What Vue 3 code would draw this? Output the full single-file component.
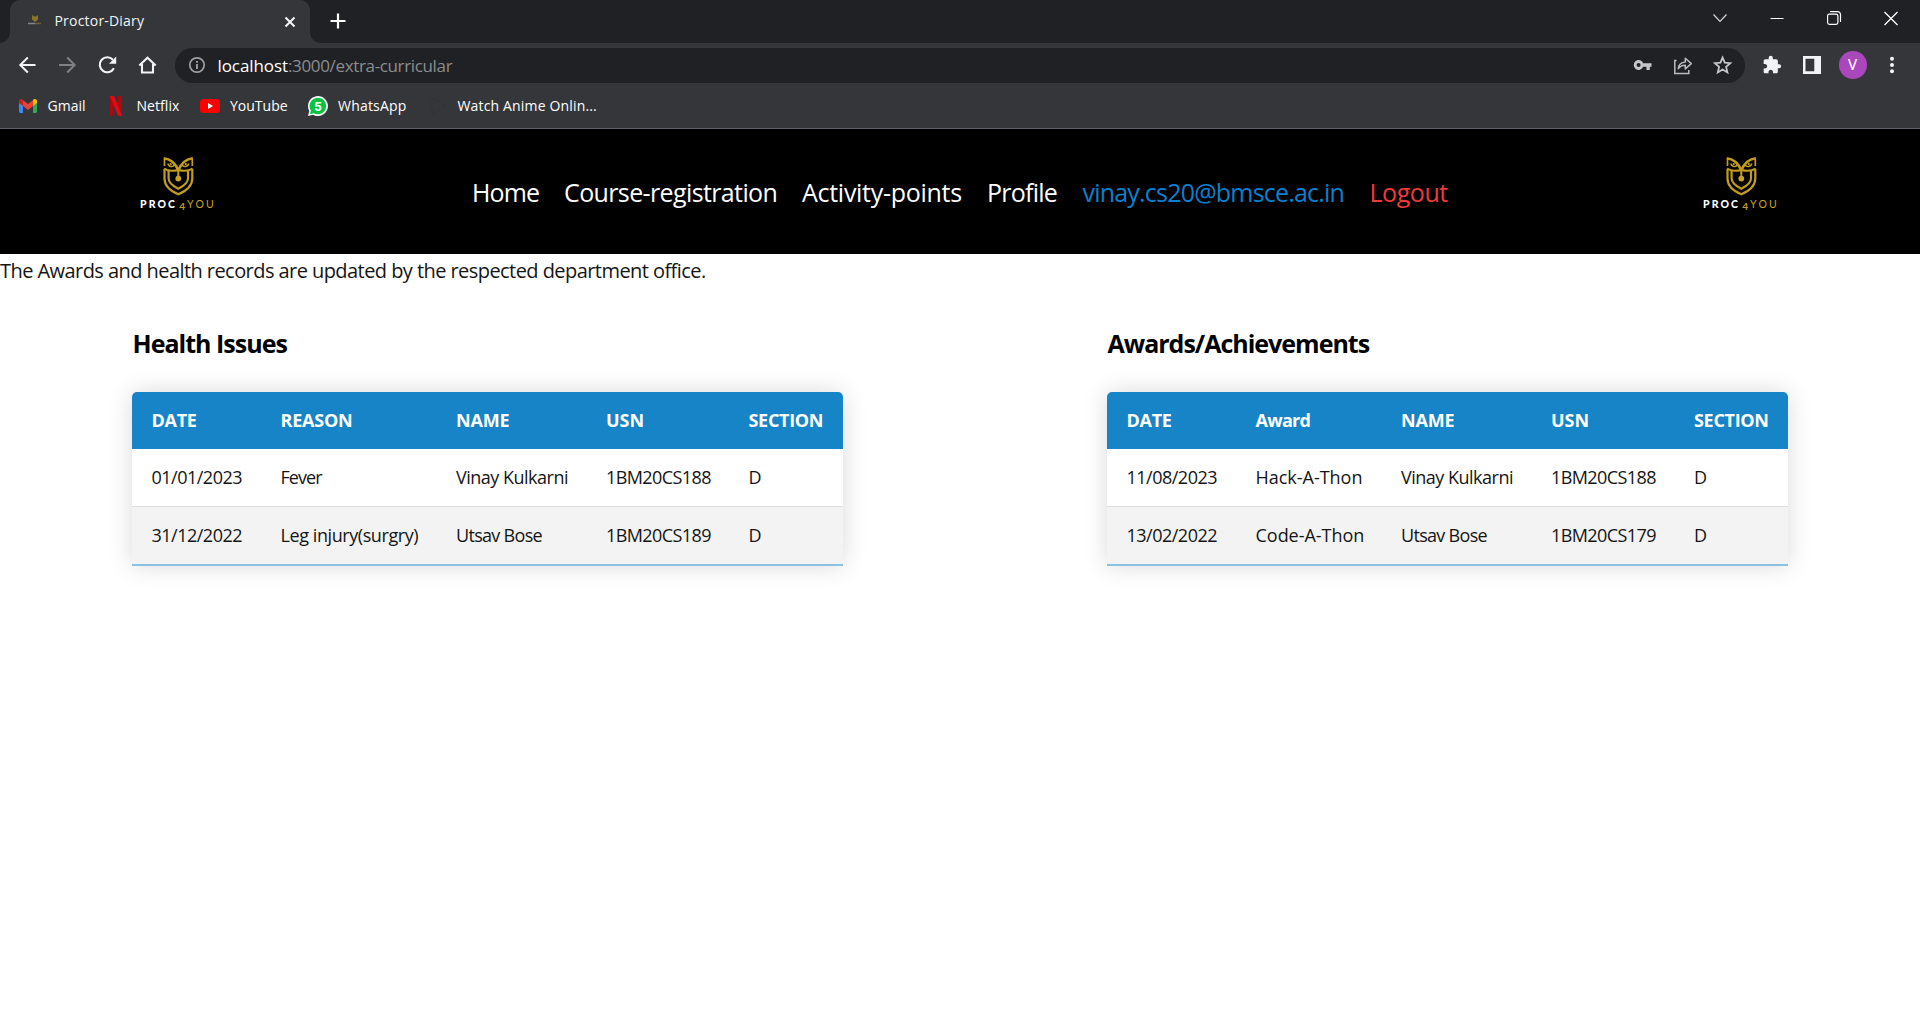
<script setup>
const bookmarks = [
  { id: 'gmail', label: 'Gmail', spacing: 0 },
  { id: 'netflix', label: 'Netflix', spacing: 0.05 },
  { id: 'youtube', label: 'YouTube', spacing: 0 },
  { id: 'whatsapp', label: 'WhatsApp', spacing: 0.2 },
  { id: 'anime', label: 'Watch Anime Onlin...', spacing: 0.16 }
]

const links = [
  { label: 'Home', spacing: -0.85 },
  { label: 'Course-registration', spacing: -0.62 },
  { label: 'Activity-points', spacing: -0.28 },
  { label: 'Profile', spacing: -0.75 },
  { label: 'vinay.cs20@bmsce.ac.in', spacing: -0.79, kind: 'email' },
  { label: 'Logout', spacing: -0.45, kind: 'logout' }
]

const tables = [
  {
    id: 'health',
    title: 'Health Issues',
    spacing: -0.98,
    widths: [129, 175.5, 150, 142.5, 114],
    head: [['DATE', -0.3], ['REASON', -0.22], ['NAME', -0.17], ['USN', 0], ['SECTION', -0.3]],
    rows: [
      [['01/01/2023', -0.5], ['Fever', -0.95], ['Vinay Kulkarni', -0.5], ['1BM20CS188', -0.58], ['D', 0]],
      [['31/12/2022', -0.5], ['Leg injury(surgry)', -0.42], ['Utsav Bose', -0.7], ['1BM20CS189', -0.58], ['D', 0]]
    ]
  },
  {
    id: 'awards',
    title: 'Awards/Achievements',
    spacing: -1,
    widths: [129, 145.5, 150, 143, 113.5],
    head: [['DATE', -0.3], ['Award', -0.7], ['NAME', -0.17], ['USN', 0], ['SECTION', -0.3]],
    rows: [
      [['11/08/2023', -0.5], ['Hack-A-Thon', -0.02], ['Vinay Kulkarni', -0.5], ['1BM20CS188', -0.58], ['D', 0]],
      [['13/02/2022', -0.5], ['Code-A-Thon', -0.02], ['Utsav Bose', -0.7], ['1BM20CS179', -0.58], ['D', 0]]
    ]
  }
]

const ls = (v) => ({ letterSpacing: v + 'px' })
</script>

<template>
  <div class="window">
    <div class="tabstrip">
      <div class="tab">
        <svg class="favicon" width="14" height="12" viewBox="0 0 14 12">
          <path d="M4 1l2 1.500h2L10 1v4.500L7 8 4 5.500z" fill="#8a7426" />
          <path d="M0 9.500h7" stroke="#85868a" stroke-width="1.500" />
          <path d="M7 9.500h6" stroke="#6f6032" stroke-width="1.500" />
        </svg>
        <span class="tab-title">Proctor-Diary</span>
        <svg class="tab-close" width="12" height="12" viewBox="0 0 12 12"><path d="M1.500 1.500l9 9M10.500 1.500l-9 9" stroke="#f4f5f6" stroke-width="2" /></svg>
      </div>
      <svg class="plus" width="16" height="16" viewBox="0 0 16 16"><path d="M8 .5v15M.5 8h15" stroke="#fff" stroke-width="2.200" /></svg>
      <div class="controls">
        <svg width="16" height="16" viewBox="0 0 16 16"><path d="M1.500 4.500L8 11.300l6.500-6.800" fill="none" stroke="#d8d9da" stroke-width="1.200" /></svg>
        <svg width="16" height="16" viewBox="0 0 16 16"><path d="M1.500 8.500h13" stroke="#fff" stroke-width="1" /></svg>
        <svg width="16" height="16" viewBox="0 0 16 16" fill="none" stroke="#fff" stroke-width="1.200"><rect x="1.600" y="4.100" width="10.300" height="10.300" rx="1.800" /><path d="M4 1.600h7.500a3 3 0 0 1 3 3V12" /></svg>
        <svg width="16" height="16" viewBox="0 0 16 16"><path d="M1.500 2l13 13M14.500 2l-13 13" stroke="#fff" stroke-width="1.300" /></svg>
      </div>
    </div>

    <div class="toolbar">
      <svg class="tool" width="20" height="20" viewBox="0 0 20 20" fill="none" stroke="#f1f3f4" stroke-width="2"><path d="M18.500 10H4M10.800 2.500L3.300 10l7.500 7.500" /></svg>
      <svg class="tool" width="20" height="20" viewBox="0 0 20 20" fill="none" stroke="#808184" stroke-width="2"><path d="M2 10H17M10.200 2.500l7.500 7.500-7.500 7.500" /></svg>
      <svg class="tool" width="20" height="20" viewBox="0 0 20 20"><path d="M16.900 13.300A7.500 7.500 0 1 1 15.900 4.800" fill="none" stroke="#f1f3f4" stroke-width="2.100" /><path d="M19.200 1.500v7.200H12z" fill="#f1f3f4" /></svg>
      <svg class="tool" width="20" height="20" viewBox="0 0 20 20" fill="none" stroke="#f1f3f4" stroke-width="2.100"><path d="M2.300 10.600l8.200-7.900 8.200 7.900M5 9v8.500h11V9" /></svg>
      <div class="omnibox">
        <svg class="info" width="18" height="18" viewBox="0 0 18 18"><circle cx="9" cy="9" r="7.200" fill="none" stroke="#9aa0a6" stroke-width="1.700" /><path d="M9 8v5M9 5v1.800" stroke="#9aa0a6" stroke-width="1.900" /></svg>
        <span class="host">localhost</span><span class="path">:3000/extra-curricular</span>
        <div class="box-icons">
          <svg width="20" height="20" viewBox="0 0 20 20"><path fill-rule="evenodd" fill="#c4c7c9" d="M10.200 8.200a4.900 4.900 0 1 0 0 3.600h3.300v3.200h3.300v-3.200h1.700V8.200zM5.600 12a2 2 0 1 1 0-4 2 2 0 0 1 0 4z" /></svg>
          <svg width="20" height="20" viewBox="0 0 20 20" fill="none" stroke="#b9bcbe" stroke-width="1.500"><path d="M3.500 5.500H1.800v13h14v-3.500" /><path d="M5.300 13.700c.3-4.200 2.900-6.500 7-6.800V3.300l6 5.300-6 5.300v-3.700c-3.200 0-5.300 1-7 3.500z" stroke-linejoin="round" /></svg>
          <svg width="20" height="20" viewBox="0 0 20 20"><path d="M9.600 2.600l2.200 5.100 5.500.5-4.200 3.700 1.300 5.500-4.800-2.900-4.800 2.900 1.300-5.500-4.200-3.700 5.500-.5z" fill="none" stroke="#c4c7c9" stroke-width="1.800" /></svg>
        </div>
      </div>
      <svg class="puzzle" width="20" height="20" viewBox="0 0 24 24"><path fill="#f1f3f4" d="M20.500 11H19V7c0-1.100-.9-2-2-2h-4V3.500a2.500 2.500 0 0 0-5 0V5H4c-1.100 0-2 .9-2 2v3.800h1.500c1.500 0 2.700 1.200 2.700 2.700S5 16.200 3.500 16.200H2V20c0 1.100.9 2 2 2h3.800v-1.500c0-1.500 1.200-2.700 2.700-2.700s2.700 1.200 2.700 2.700V22H17c1.100 0 2-.9 2-2v-4h1.500a2.500 2.500 0 0 0 0-5z" /></svg>
      <svg class="panel" width="18" height="18" viewBox="0 0 18 18"><path fill="#f1f3f4" fill-rule="evenodd" d="M0 0h18v18H0zM2.500 2.800v12.400h8.800V2.800z" /></svg>
      <div class="avatar">V</div>
      <svg class="dots" width="6" height="18" viewBox="0 0 6 18" fill="#f1f3f4"><circle cx="3" cy="2.700" r="2" /><circle cx="3" cy="9" r="2" /><circle cx="3" cy="15.300" r="2" /></svg>
    </div>

    <div class="bookmarks">
      <div v-for="b in bookmarks" :key="b.id" class="bookmark" :class="b.id">
        <svg v-if="b.id === 'gmail'" width="18" height="14" viewBox="0 0 18 14">
          <path d="M0 2.500v10C0 13.300.6 14 1.400 14H4V5.500z" fill="#4285f4" /><path d="M18 2.500v10c0 .8-.6 1.500-1.400 1.500H14V5.500z" fill="#34a853" />
          <path d="M4 1.200v5.900l5 3.800 5-3.800V1.200L9 5z" fill="#ea4335" /><path d="M0 2.200C0 .3 2 -.5 3.500.6L4 1v6.100L0 4.100z" fill="#c5221f" /><path d="M18 2.200C18 .3 16 -.5 14.500.6L14 1v6.100l4-3z" fill="#fbbc04" />
        </svg>
        <svg v-else-if="b.id === 'netflix'" width="12" height="20" viewBox="0 0 12 20">
          <path d="M0 0h4v19.500L0 20zM8 0h4v20l-4-.5z" fill="#a90a12" /><path d="M0 0h4l8 20-4-.5z" fill="#e50914" />
        </svg>
        <svg v-else-if="b.id === 'youtube'" width="20" height="14" viewBox="0 0 20 14"><rect width="20" height="14" rx="3.500" fill="#f00" /><path d="M8 4l5 3-5 3z" fill="#fff" /></svg>
        <svg v-else-if="b.id === 'whatsapp'" width="20" height="20" viewBox="0 0 20 20">
          <path d="M0 20l1.300-5A10 10 0 1 1 5 18.700z" fill="#fff" /><path d="M1.900 18.200l1-3.600A8.300 8.300 0 1 1 5.700 17.200z" fill="#06c43f" />
          <text x="10.100" y="14.800" text-anchor="middle" class="badge">5</text>
        </svg>
        <svg v-else width="16" height="18" viewBox="0 0 16 18"><path d="M1 1l14 8-14 8z" fill="none" stroke="#323336" stroke-width="1" /></svg>
        <span class="mark-label" :style="ls(b.spacing)">{{ b.label }}</span>
      </div>
    </div>

    <header class="site-header">
      <div v-for="side in ['left', 'right']" :key="side" class="logo" :class="side">
        <svg width="80" height="58" viewBox="0 0 80 58">
          <g fill="none" stroke="#c09c1f" stroke-width="2.200">
            <path d="M25.500 22v9.500C25.500 39 31.500 44 39.300 47.300 47 44 53.300 39 53.300 31.500V22" />
            <path d="M29.600 24v7.500c0 4.500 4.200 7.500 9.700 10.300 5.500-2.800 9.700-5.800 9.700-10.300V24" />
            <path d="M24.700 11.300c5.500.6 11.500 4.700 14.600 12 3.100-7.300 9.100-11.400 14.600-12" stroke-width="2.600" />
            <path d="M25.500 12v7M53.300 12v7" stroke-width="1.700" />
            <path d="M25 21.500c5 3.500 9.500 2.700 14.300 1.500 4.800 1.200 9.300 2 14.300-1.500" stroke-width="2" />
            <path d="M29 16.500c.4 3.400 5.200 4 6.400 1.300M49.600 16.500c-.4 3.400-5.200 4-6.400 1.300" stroke-width="1.600" />
            <path d="M39.300 23v7" stroke-width="2" />
          </g>
          <circle cx="31.800" cy="17" r="1.100" fill="#c9a322" />
          <circle cx="46.800" cy="17" r="1.100" fill="#c9a322" />
          <circle cx="39.300" cy="31.600" r="2.900" fill="#c9a322" />
          <text x="1" y="61.200" class="logo-proc" textLength="35">PROC</text>
          <text x="40.300" y="63" class="logo-four">4</text>
          <text x="48" y="61.200" class="logo-you" textLength="26.800">YOU</text>
        </svg>
      </div>
      <nav class="nav">
        <a v-for="l in links" :key="l.label" :class="l.kind" :style="ls(l.spacing)">{{ l.label }}</a>
      </nav>
    </header>

    <main>
      <p class="note">The Awards and health records are updated by the respected department office.</p>
      <div class="columns">
        <section v-for="t in tables" :key="t.id">
          <h2 :style="ls(t.spacing)">{{ t.title }}</h2>
          <table>
            <colgroup><col v-for="(w, i) in t.widths" :key="i" :style="{ width: w + 'px' }" /></colgroup>
            <thead><tr><th v-for="h in t.head" :key="h[0]" :style="ls(h[1])">{{ h[0] }}</th></tr></thead>
            <tbody>
              <tr v-for="(r, i) in t.rows" :key="i"><td v-for="(c, j) in r" :key="j" :style="ls(c[1])">{{ c[0] }}</td></tr>
            </tbody>
          </table>
        </section>
      </div>
    </main>
  </div>
</template>

<style>
body { margin: 0; background: #fff; }
</style>

<style scoped>
.window { width: 1920px; height: 1020px; overflow: hidden; font-family: "Open Sans", "Noto Sans", sans-serif; color: #000; background: #fff; }
svg { display: block; flex: none; overflow: visible; }
.tabstrip { display: flex; height: 43px; background: #202124; padding-left: 10px; box-sizing: border-box; }
.tab { position: relative; display: flex; align-items: center; width: 300px; height: 43px; box-sizing: border-box; padding: 0 14px 0 18px; border-radius: 10px 10px 0 0; background: #35363a; }
.tab::before, .tab::after { content: ""; position: absolute; bottom: 0; width: 10px; height: 10px; }
.tab::before { left: -10px; background: radial-gradient(circle at 0 0, #202124 9.5px, #35363a 10px); }
.tab::after { right: -10px; background: radial-gradient(circle at 100% 0, #202124 9.5px, #35363a 10px); }
.favicon { margin-top: -3px; }
.tab-title { margin-left: 12.500px; font-size: 14px; line-height: 20px; margin-top: -2px; letter-spacing: 0.2px; color: #f1f3f4; }
.tab-close { margin-left: auto; }
.plus { margin: 13px 0 0 19.500px; }
.controls { display: flex; gap: 41px; margin: 10px 21px 0 auto; }
.toolbar { display: flex; align-items: center; height: 44px; background: #35363a; padding-left: 17px; }
.tool { margin-right: 20px; }
.omnibox { display: flex; align-items: center; width: 1570px; height: 35px; margin-left: -2px; border-radius: 18px; background: #202124; box-sizing: border-box; padding: 0 20px 0 13px; font-size: 17px; line-height: 24px; }
.info { margin: 0 11.500px 0 0; }
.host, .path { margin-top: 1px; }
.host { color: #fff; letter-spacing: -0.08px; }
.path { color: #8b8d90; letter-spacing: -0.35px; }
.box-icons { display: flex; gap: 20px; margin: 0 -7.500px 0 auto; }
.puzzle { margin-left: 17px; }
.panel { margin-left: 21px; }
.avatar { width: 28px; height: 28px; border-radius: 50%; background: #ab47bc; color: #fff; font: 15px/28px Roboto, sans-serif; text-align: center; margin-left: 17.500px; }
.dots { margin-left: 22.500px; }
.bookmarks { display: flex; align-items: center; height: 42px; box-sizing: border-box; padding: 0 0 3px 19px; background: #35363a; border-bottom: 1px solid #625d66; color: #fff; font-size: 14px; line-height: 20px; }
.bookmark { display: flex; align-items: center; white-space: nowrap; }
.mark-label { margin-top: -1px; }
.gmail { width: 91px; gap: 10.500px; }
.netflix { width: 90px; gap: 14.500px; }
.youtube { width: 108px; gap: 10px; }
.whatsapp { width: 123px; gap: 10px; }
.anime { gap: 10.500px; }
.badge { font: 700 13px Roboto, sans-serif; fill: #fff; }
.site-header { position: relative; height: 125px; background: #000; box-sizing: border-box; padding: 46px 0 0 472px; }
.logo { position: absolute; top: 18px; }
.logo.left { left: 139px; }
.logo.right { left: 1702px; }
.logo-proc { font: 900 10.500px Lato, sans-serif; fill: #fff; }
.logo-four { font: 700 10px Lato, sans-serif; fill: #bd9a20; }
.logo-you { font: 400 10.500px Lato, sans-serif; fill: #c9a322; }
.nav { display: grid; grid-template-columns: 92px 238px 185px 95.500px 287px 100px; font-size: 25px; line-height: 34px; color: #fff; white-space: nowrap; }
.email { color: #0a80cf; }
.logout { color: #f03a3a; }
.note { margin: 0; padding-top: 1px; font-size: 20px; line-height: 32px; letter-spacing: -0.56px; color: #151515; white-space: nowrap; }
.columns { display: flex; justify-content: space-between; padding: 39px 132px 0; }
h2 { margin: 0; padding-left: 0.500px; font-size: 25px; line-height: 34px; font-weight: 700; white-space: nowrap; }
table { margin-top: 32px; table-layout: fixed; width: 1px; border-collapse: separate; border-spacing: 0; border-radius: 5px 5px 0 0; overflow: hidden; box-shadow: 0 0 25px rgba(0, 0, 0, 0.15); font-size: 18px; line-height: 25px; white-space: nowrap; }
th, td { padding: 0 0 0 19.500px; height: 57px; text-align: left; }
th { background: #1784c7; color: #fff; font-weight: 700; }
td { border-bottom: 1px solid #ddd; color: #151515; }
tr:last-child td { background: #f3f3f3; border-bottom: 2px solid #8bc1e3; }
</style>
